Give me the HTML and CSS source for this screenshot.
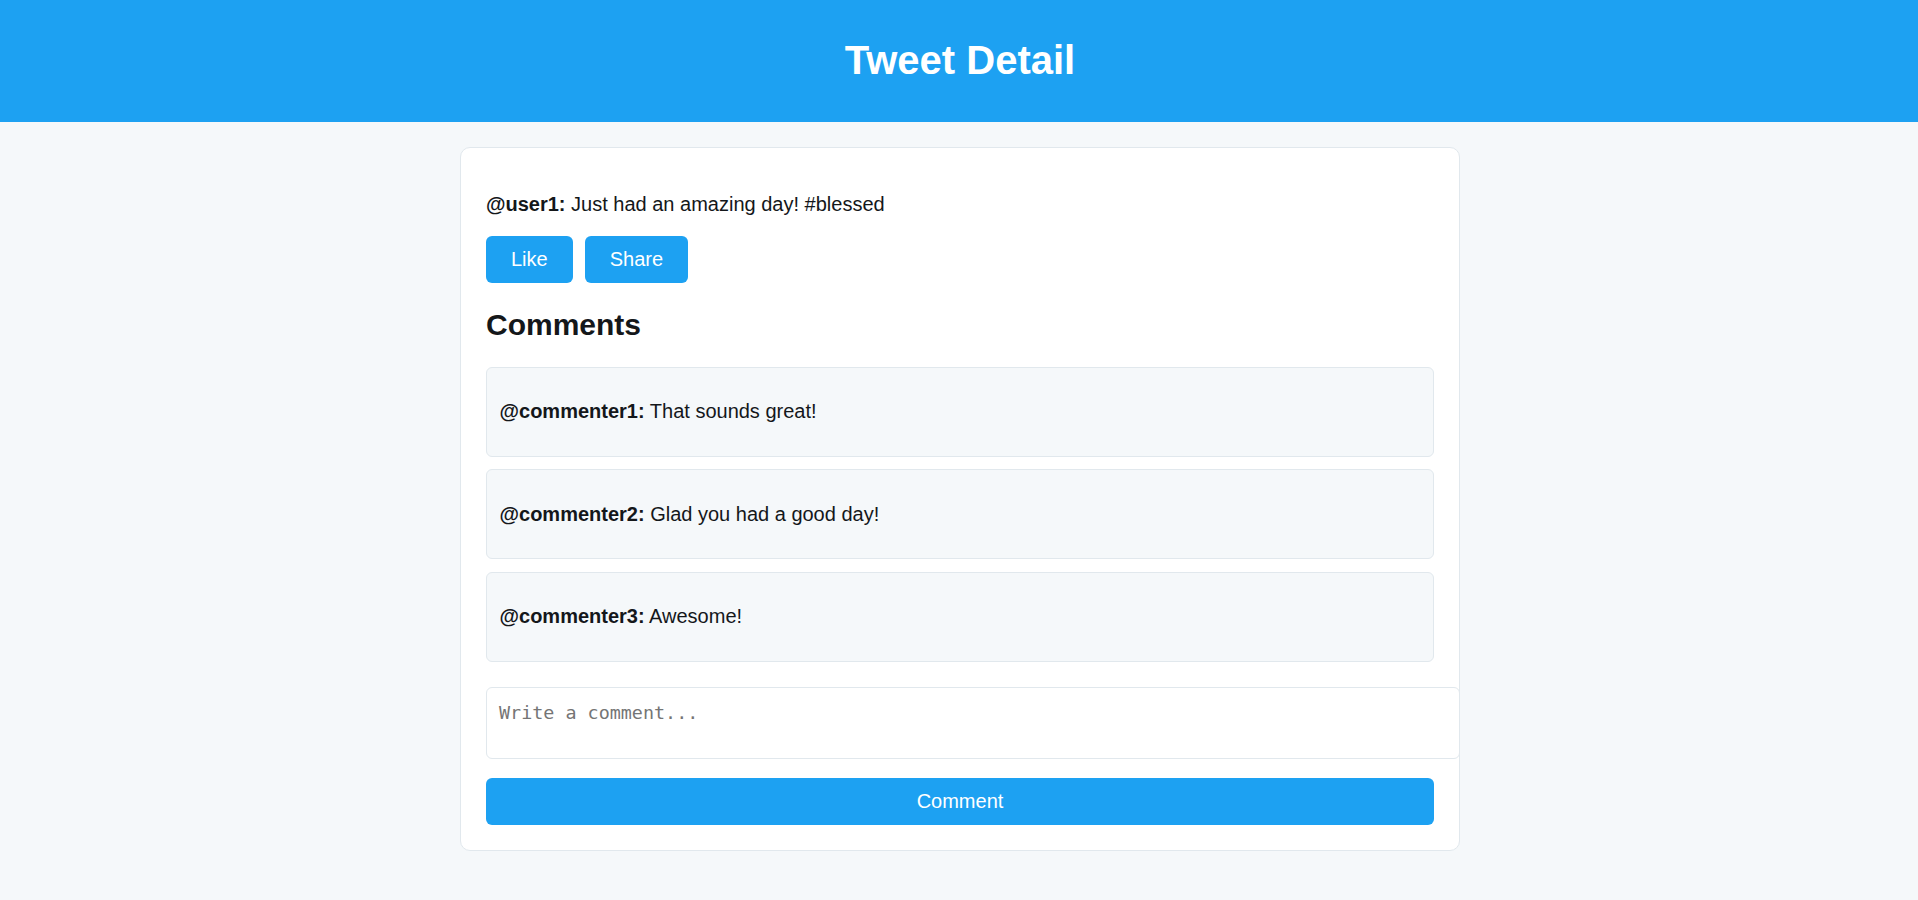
FILE: index.html
```html
<!DOCTYPE html>
<html lang="en">
<head>
<meta charset="utf-8">
<title>Tweet Detail</title>
<link rel="stylesheet" href="styles.css">
</head>
<body>
<header class="topbar">
  <h1 class="topbar-title">Tweet Detail</h1>
</header>
<main class="card">
  <p class="tweet"><strong>@user1:</strong> Just had an amazing day! #blessed</p>
  <div class="actions">
    <button class="btn">Like</button>
    <button class="btn">Share</button>
  </div>
  <h2 class="section-title">Comments</h2>
  <div class="comments">
    <div class="comment"><p><strong>@commenter1:</strong> That sounds great!</p></div>
    <div class="comment"><p><strong>@commenter2:</strong> Glad you had a good day!</p></div>
    <div class="comment"><p><strong>@commenter3:</strong> Awesome!</p></div>
  </div>
  <form class="comment-form">
    <textarea class="comment-input" placeholder="Write a comment..."></textarea>
    <button type="button" class="btn btn-block">Comment</button>
  </form>
</main>
</body>
</html>
```

FILE: styles.css
```css
html, body {
  margin: 0;
  padding: 0;
}
body {
  background: #f5f8fa;
  font-family: "Liberation Sans", Arial, sans-serif;
  font-size: 20px;
  color: #14171a;
}
.topbar {
  background: #1da1f2;
  height: 122px;
  display: flex;
  align-items: center;
  justify-content: center;
}
.topbar-title {
  margin: 0 0 2px 2px;
  color: #ffffff;
  font-size: 40px;
  font-weight: bold;
  line-height: 46px;
}
.card {
  box-sizing: border-box;
  width: 1000px;
  margin: 25px 0 0 calc(50% - 499px);
  background: #ffffff;
  border: 1px solid #e1e8ed;
  border-radius: 10px;
  padding: 25px;
}
.tweet {
  margin: 20px 0;
  line-height: 23px;
}
.actions {
  display: flex;
  gap: 12px;
}
.btn {
  font-family: "Liberation Sans", Arial, sans-serif;
  font-size: 20px;
  line-height: 23px;
  color: #ffffff;
  background: #1da1f2;
  border: none;
  border-radius: 6px;
  padding: 12px 25px;
  cursor: pointer;
}
.section-title {
  font-size: 30px;
  font-weight: bold;
  line-height: 34.5px;
  margin: 25px 0 24px;
  color: #14171a;
}
.comment {
  background: #f5f8fa;
  border: 1px solid #e1e8ed;
  border-radius: 6px;
  padding: 12.5px;
  margin-bottom: 12.5px;
}
.comment p {
  margin: 20px 0;
  line-height: 23px;
}
.comment-form {
  margin-top: 25px;
}
.comment-input {
  display: block;
  box-sizing: content-box;
  width: 100%;
  height: 46px;
  padding: 13px 12px 11px;
  margin: 0 0 19px;
  border: 1px solid #e1e8ed;
  border-radius: 6px;
  font-family: "DejaVu Sans Mono", "Liberation Mono", monospace;
  font-size: 18.4px;
  line-height: 24px;
  color: #14171a;
  background: #ffffff;
  resize: none;
}
.comment-input::placeholder {
  color: #757575;
}
.btn-block {
  display: block;
  width: 100%;
  padding: 12px 0;
  text-align: center;
}
```
